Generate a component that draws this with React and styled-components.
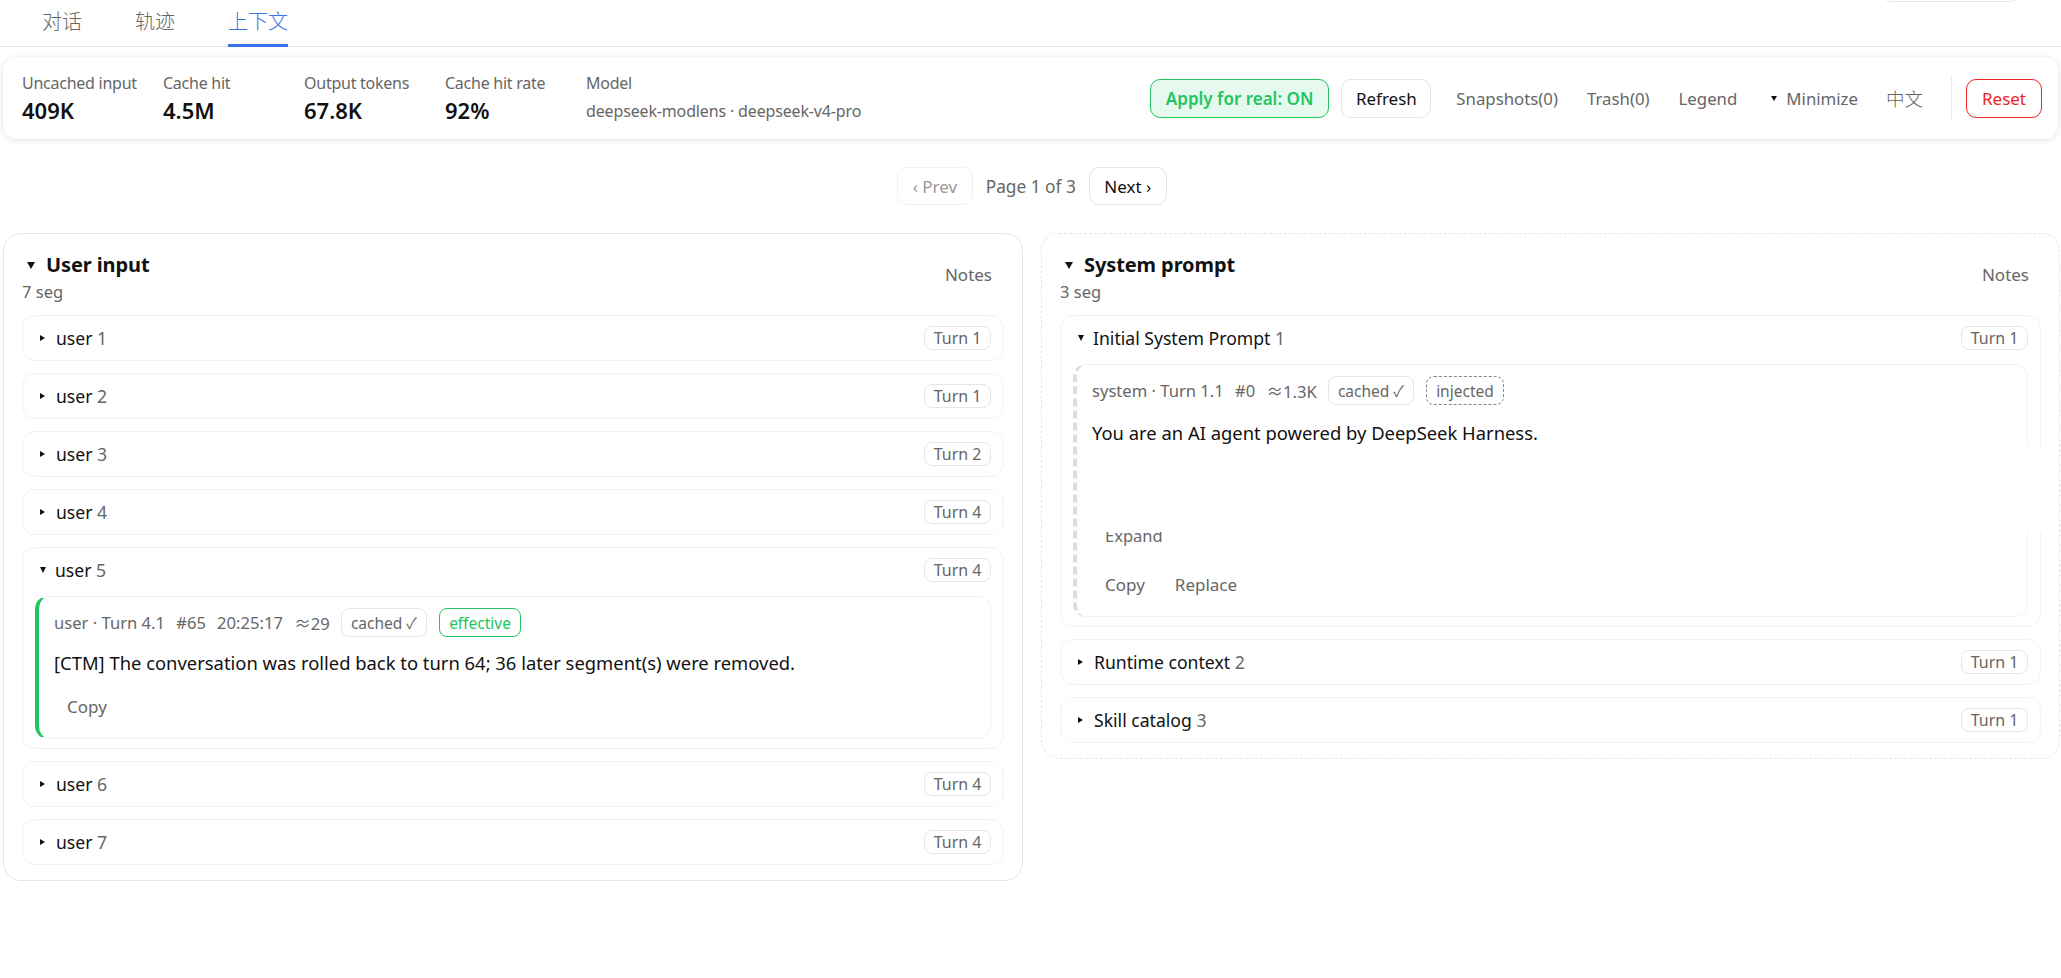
import React from "react";
import styled, { createGlobalStyle } from "styled-components";

const GlobalStyle = createGlobalStyle`
  html, body {
    margin: 0;
    background: #fff;
    color: #111;
    font-family: "Noto Sans", "Noto Sans CJK SC", sans-serif;
  }
  * { box-sizing: border-box; }
`;

const TabBar = styled.div`
  height: 47px;
  border-bottom: 1px solid #e5e5e5;
  padding: 0 41px 0 42px;
  display: flex;
  gap: 53px;
`;
const Tab = styled.div`
  height: 47px;
  padding-top: 6px;
  font-size: 20px;
  line-height: 30px;
  font-family: "Noto Sans CJK SC", sans-serif;
  font-weight: 300;
  color: ${(p) => (p.$active ? "#3b73e6" : "#666")};
  border-bottom: ${(p) => (p.$active ? "3px solid #3b73e6" : "none")};
`;
const ClippedButton = styled.div`
  margin-left: auto;
  width: 139px;
  height: 40px;
  margin-top: -38px;
  border: 1px solid #e5e5e5;
  border-radius: 10px;
`;

const Summary = styled.div`
  margin: 10px 3px 0;
  height: 82px;
  padding: 0 16px 0 19px;
  display: flex;
  align-items: center;
  justify-content: space-between;
  background: #fff;
  border-radius: 14px;
  box-shadow: 0 1px 6px rgba(0, 0, 0, 0.12);
`;
const Stats = styled.div`
  display: flex;
`;
const Stat = styled.div`
  width: ${(p) => (p.$wide ? "320px" : "141px")};
`;
const StatLabel = styled.div`
  font-size: 16px;
  line-height: 22px;
  letter-spacing: -0.25px;
  color: #666;
`;
const StatValue = styled.div`
  margin-top: 2px;
  font-size: 22px;
  line-height: 28px;
  font-weight: 600;
  color: #111;
`;
const ModelValue = styled.div`
  margin-top: 3px;
  font-size: 16px;
  line-height: 28px;
  letter-spacing: -0.15px;
  color: #666;
`;
const Actions = styled.div`
  display: flex;
  align-items: center;
`;
const Button = styled.div`
  height: 39px;
  padding: 0 15px;
  display: flex;
  align-items: center;
  font-size: 17px;
  border-radius: 10px;
  border: 1px solid #e5e5e5;
  color: #111;
`;
const ApplyButton = styled(Button)`
  background: #e6f9ee;
  border-color: #22c55e;
  color: #22c55e;
  font-weight: 600;
  margin-right: 12px;
`;
const RefreshButton = styled(Button)`
  padding: 0 13.5px;
`;
const ResetButton = styled(Button)`
  border-color: #ee2222;
  color: #ee2222;
`;
const LinkButton = styled.div`
  font-size: 16.8px;
  color: #666;
  margin-left: ${(p) => p.$gap || 29}px;
  display: flex;
  align-items: center;
`;
const Lang = styled(LinkButton)`
  font-family: "Noto Sans CJK SC", sans-serif;
  font-size: 18.5px;
  font-weight: 300;
`;
const Divider = styled.div`
  width: 1px;
  height: 46px;
  background: #e9e9e9;
  margin: 0 14px 0 28px;
`;

const Pager = styled.div`
  margin-top: 28px;
  height: 38px;
  display: flex;
  justify-content: center;
  align-items: center;
  gap: 13px;
  padding-left: 3px;
`;
const PagerButton = styled(Button)`
  height: 38px;
  padding: 0 14.5px;
  color: ${(p) => (p.$disabled ? "#999" : "#111")};
  border-color: ${(p) => (p.$disabled ? "#f0f0f0" : "#e5e5e5")};
`;
const PageInfo = styled.div`
  font-size: 17.3px;
  color: #666;
`;

const Columns = styled.div`
  margin-top: 28px;
  padding-left: 3px;
  display: grid;
  grid-template-columns: 1020px 1019px;
  gap: 18px;
  align-items: start;
`;
const Panel = styled.section`
  border: 1px ${(p) => (p.$dashed ? "dashed" : "solid")} #e5e5e5;
  border-radius: 18px;
  padding: 0 18px 15px 18px;
`;
const PanelHead = styled.div`
  height: 81px;
  display: flex;
  justify-content: space-between;
  align-items: center;
`;
const TitleBlock = styled.div`
  align-self: flex-start;
  padding-top: 17px;
`;
const PanelTitle = styled.div`
  display: flex;
  align-items: center;
  padding-left: 5px;
  gap: 11px;
  font-size: 20px;
  line-height: 28px;
  font-weight: 700;
  letter-spacing: -0.1px;
  color: #111;
`;
const SegCount = styled.div`
  font-size: 16.5px;
  line-height: 24px;
  margin-top: 1px;
  color: #666;
`;
const Notes = styled.div`
  font-size: 17px;
  color: #666;
  margin-right: 12px;
`;

const Caret = styled.span`
  display: inline-block;
  width: 0;
  height: 0;
  flex: none;
  ${(p) =>
    p.$open
      ? `border-left: ${p.$half}px solid transparent;
         border-right: ${p.$half}px solid transparent;
         border-top: ${p.$depth}px solid #111;`
      : `border-top: ${p.$half}px solid transparent;
         border-bottom: ${p.$half}px solid transparent;
         border-left: ${p.$depth}px solid #111;`}
`;
const MinimizeCaret = styled(Caret)`
  margin-right: 9px;
`;
const SegCaret = styled(Caret)`
  margin-right: ${(p) => (p.$open ? 9 : 11)}px;
`;

const SegList = styled.div`
  display: flex;
  flex-direction: column;
  gap: 12px;
`;
const SegCard = styled.div`
  position: relative;
  border: 1px solid #f2f2f2;
  border-radius: 13px;
`;
const SegHead = styled.div`
  height: 44px;
  padding: 0 12px 0 17px;
  display: flex;
  align-items: center;
  font-size: 17.6px;
  color: #111;
`;
const SegIndex = styled.span`
  color: #666;
`;
const TurnBadge = styled.div`
  margin-left: auto;
  height: 24px;
  padding: 0 8.5px;
  display: flex;
  align-items: center;
  font-size: 16px;
  color: #666;
  border: 1px solid #e5e5e5;
  border-radius: 8px;
`;
const Entry = styled.div`
  margin: 4px 12px 9px 12px;
  padding: 11px 16px 16px 15px;
  border: 1px solid #f2f2f2;
  border-left: 4px ${(p) => (p.$injected ? "dashed #ddd" : "solid #22c55e")};
  border-radius: 13px;
`;
const MetaRow = styled.div`
  height: 29px;
  display: flex;
  align-items: center;
  gap: 11.2px;
  font-size: 16.6px;
  color: #666;
`;
const Pill = styled.span`
  height: 29px;
  padding: 0 9px;
  display: flex;
  align-items: center;
  border-radius: 8px;
  font-size: 15.5px;
  border: 1px ${(p) => (p.$injected ? "dashed" : "solid")};
  border-color: ${(p) => (p.$effective ? "#22c55e" : p.$injected ? "#888" : "#e5e5e5")};
  color: ${(p) => (p.$effective ? "#22c55e" : "#666")};
  & + & {
    margin-left: 1px;
  }
`;
const EntryBody = styled.div`
  margin-top: ${(p) => (p.$clamped ? 15 : 13)}px;
  height: ${(p) => (p.$clamped ? "102px" : "26px")};
  font-size: 18.4px;
  line-height: 26px;
  color: #111;
`;
const Expand = styled.div`
  height: 27px;
  padding-left: 13px;
  font-size: 16.5px;
  line-height: 27px;
  color: #666;
`;
const EntryActions = styled.div`
  margin-top: ${(p) => (p.$tight ? 19 : 14)}px;
  height: 32px;
  padding-left: 13px;
  display: flex;
  align-items: center;
  gap: 30px;
  font-size: 17px;
  color: #666;
`;
// white band that lies over the clamped prompt text
const FadeBand = styled.div`
  position: absolute;
  top: 130px;
  left: 20px;
  right: -1px;
  height: 86px;
  background: #fff;
`;

const userRows = [
  { n: 1, turn: 1 },
  { n: 2, turn: 1 },
  { n: 3, turn: 2 },
  { n: 4, turn: 4 },
  { n: 5, turn: 4, open: true },
  { n: 6, turn: 4 },
  { n: 7, turn: 4 },
];

const SegHeader = ({ open, label, index, turn }) => (
  <SegHead>
    {open ? <SegCaret $open $half={3.5} $depth={6} /> : <SegCaret $half={3} $depth={5} />}
    <span>
      {label} <SegIndex>{index}</SegIndex>
    </span>
    <TurnBadge>Turn {turn}</TurnBadge>
  </SegHead>
);

export default function App() {
  return (
    <>
      <GlobalStyle />
      <TabBar>
        <Tab>对话</Tab>
        <Tab>轨迹</Tab>
        <Tab $active>上下文</Tab>
        <ClippedButton />
      </TabBar>

      <Summary>
        <Stats>
          <Stat>
            <StatLabel>Uncached input</StatLabel>
            <StatValue>409K</StatValue>
          </Stat>
          <Stat>
            <StatLabel>Cache hit</StatLabel>
            <StatValue>4.5M</StatValue>
          </Stat>
          <Stat>
            <StatLabel>Output tokens</StatLabel>
            <StatValue>67.8K</StatValue>
          </Stat>
          <Stat>
            <StatLabel>Cache hit rate</StatLabel>
            <StatValue>92%</StatValue>
          </Stat>
          <Stat $wide>
            <StatLabel>Model</StatLabel>
            <ModelValue>deepseek-modlens · deepseek-v4-pro</ModelValue>
          </Stat>
        </Stats>
        <Actions>
          <ApplyButton>Apply for real: ON</ApplyButton>
          <RefreshButton>Refresh</RefreshButton>
          <LinkButton $gap={25}>Snapshots(0)</LinkButton>
          <LinkButton $gap={29}>Trash(0)</LinkButton>
          <LinkButton $gap={29}>Legend</LinkButton>
          <LinkButton $gap={34}>
            <MinimizeCaret $open $half={3} $depth={5} />
            Minimize
          </LinkButton>
          <Lang $gap={28}>中文</Lang>
          <Divider />
          <ResetButton>Reset</ResetButton>
        </Actions>
      </Summary>

      <Pager>
        <PagerButton $disabled>‹ Prev</PagerButton>
        <PageInfo>Page 1 of 3</PageInfo>
        <PagerButton>Next ›</PagerButton>
      </Pager>

      <Columns>
        <Panel>
          <PanelHead>
            <TitleBlock>
              <PanelTitle>
                <Caret $open $half={4.5} $depth={7} />
                User input
              </PanelTitle>
              <SegCount>7 seg</SegCount>
            </TitleBlock>
            <Notes>Notes</Notes>
          </PanelHead>
          <SegList>
            {userRows.map((row) => (
              <SegCard key={row.n}>
                <SegHeader open={row.open} label="user" index={row.n} turn={row.turn} />
                {row.open && (
                  <Entry>
                    <MetaRow>
                      <span>user · Turn 4.1</span>
                      <span>#65</span>
                      <span>20:25:17</span>
                      <span>≈29</span>
                      <Pill>cached ✓</Pill>
                      <Pill $effective>effective</Pill>
                    </MetaRow>
                    <EntryBody>
                      [CTM] The conversation was rolled back to turn 64; 36 later segment(s) were removed.
                    </EntryBody>
                    <EntryActions>
                      <span>Copy</span>
                    </EntryActions>
                  </Entry>
                )}
              </SegCard>
            ))}
          </SegList>
        </Panel>

        <Panel $dashed>
          <PanelHead>
            <TitleBlock>
              <PanelTitle>
                <Caret $open $half={4.5} $depth={7} />
                System prompt
              </PanelTitle>
              <SegCount>3 seg</SegCount>
            </TitleBlock>
            <Notes>Notes</Notes>
          </PanelHead>
          <SegList>
            <SegCard>
              <SegHeader open label="Initial System Prompt" index={1} turn={1} />
              <Entry $injected>
                <MetaRow>
                  <span>system · Turn 1.1</span>
                  <span>#0</span>
                  <span>≈1.3K</span>
                  <Pill>cached ✓</Pill>
                  <Pill $injected>injected</Pill>
                </MetaRow>
                <EntryBody $clamped>You are an AI agent powered by DeepSeek Harness.</EntryBody>
                <Expand>Expand</Expand>
                <EntryActions $tight>
                  <span>Copy</span>
                  <span>Replace</span>
                </EntryActions>
              </Entry>
              <FadeBand />
            </SegCard>
            <SegCard>
              <SegHeader label="Runtime context" index={2} turn={1} />
            </SegCard>
            <SegCard>
              <SegHeader label="Skill catalog" index={3} turn={1} />
            </SegCard>
          </SegList>
        </Panel>
      </Columns>
    </>
  );
}
